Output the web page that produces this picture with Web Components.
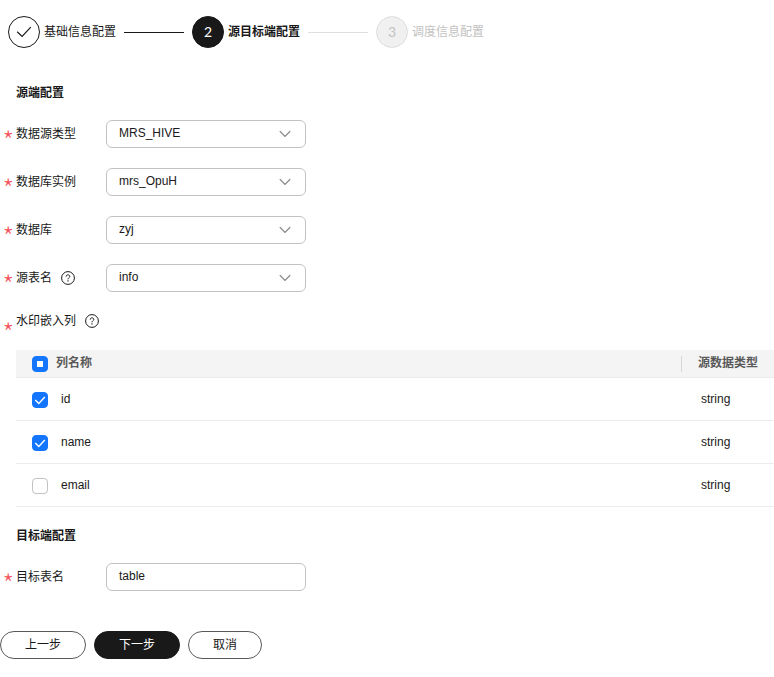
<!DOCTYPE html>
<html lang="zh-CN">
<head>
<meta charset="utf-8">
<title>源目标端配置</title>
<style>
html,body{margin:0;background:#fff}
body{width:774px;height:677px;overflow:hidden;font:12px/18px "Liberation Sans","Noto Sans CJK SC",sans-serif;color:#191919}
</style>
</head>
<body>
<wizard-page></wizard-page>
<script>
const define = (name, html, setup) => {
  const t = document.createElement('template');
  t.innerHTML = html;
  customElements.define(name, class extends HTMLElement {
    constructor() {
      super();
      this.attachShadow({mode: 'open'}).append(t.content.cloneNode(true));
    }
    connectedCallback() { if (setup) setup(this, this.shadowRoot); }
  });
};

define('step-item', `<style>
:host{display:flex;align-items:center;gap:4px;height:32px}
.dot{box-sizing:border-box;width:32px;height:32px;border-radius:50%;border:1px solid #191919;display:flex;align-items:center;justify-content:center;font:14px/20px Lato,"Liberation Sans",sans-serif}
svg{display:none}
:host([state=done]) svg{display:block}
:host([state=active]) .dot{background:#191919;color:#fff}
:host([state=active]) .label{font-weight:700}
:host([state=wait]) .dot{background:#f0f0f0;border-color:#dfdfdf;color:#c2c2c2}
:host([state=wait]) .label{color:#c2c2c2}
.label{white-space:nowrap}
</style><span class="dot"><svg width="16" height="12" viewBox="0 0 16 12" fill="none" stroke="#191919" stroke-width="1.2"><path d="M1.2 5.8 6.1 10.5 14.8 1.2"/></svg><span class="num"></span></span><span class="label"><slot></slot></span>`,
(el, r) => { r.querySelector('.num').textContent = el.getAttribute('num') || ''; });

define('step-line', `<style>
:host{display:block;width:60px;height:1px;margin:1px 8px 0;background:#191919}
:host([muted]){background:#dfdfdf}
</style>`);

define('section-title', `<style>:host{display:block;height:18px;padding-left:16px;font-weight:700}</style><slot></slot>`);

define('help-icon', `<style>:host{display:block;width:14px;height:14px}svg{display:block}</style>
<svg width="14" height="14" viewBox="0 0 14 14" fill="none" stroke="#191919"><circle cx="7" cy="7" r="6.4" stroke-width="1"/><path d="M5.2 5.6C5.2 4.5 6 3.8 7 3.8s1.8.7 1.8 1.6C8.8 6.6 7 6.7 7 8.3" stroke-width="1"/><path d="M7 9.2v1.2" stroke-width="1.1"/></svg>`);

define('form-row', `<style>
:host{display:flex;align-items:center;height:28px}
.star{box-sizing:border-box;width:12px;margin:0 4px 0 0;padding-left:2.5px;height:18px;font:300 26px/30px "Noto Sans CJK SC",sans-serif;color:#f3535b}
:host([low]) .star{margin-top:10px}
.label{width:90px;display:flex;align-items:center;gap:9px;white-space:nowrap}
</style><span class="star">*</span><span class="label"><span class="t"></span><slot name="help"></slot></span><slot></slot>`,
(el, r) => { r.querySelector('.t').textContent = el.getAttribute('label'); });

define('field-box', `<style>
:host{box-sizing:border-box;width:200px;height:28px;border:1px solid #c2c2c2;border-radius:6px;display:flex;align-items:center;justify-content:space-between;padding:0 14px 2px 12px;line-height:16px}
svg{display:none}
:host([select]) svg{display:block;margin-top:2px}
</style><slot></slot><svg width="12" height="8" viewBox="0 0 12 8" fill="none" stroke="#808080" stroke-width="1.2"><path d="M.8 1.2 6 6.4l5.2-5.2"/></svg>`);

define('check-box', `<style>
:host{box-sizing:border-box;display:block;width:16px;height:16px;border:1px solid #c2c2c2;border-radius:4px;background:#fff}
:host([state]){border-color:#1476ff;background:#1476ff}
svg{display:block;margin:-1px}
path,rect{display:none}
:host([state=on]) path,:host([state=some]) rect{display:block}
</style><svg width="16" height="16" viewBox="0 0 16 16" fill="none"><path d="m3.3 8 3.5 3.5 6-6.4" stroke="#fff" stroke-width="1.4"/><rect x="5" y="5" width="6" height="6" rx=".5" fill="#fff"/></svg>`);

define('table-row', `<style>
:host{box-sizing:border-box;display:grid;grid-template-columns:16px 1fr 93px;height:43px;border-bottom:1px solid #ececec;padding-left:16px;align-items:center}
::slotted(check-box){margin-top:2px}
.name{padding-left:13px}.type{padding-left:20px}
:host([head]){height:28px;background:#f4f4f4;color:#595959;font-weight:700}
:host([head]) ::slotted(check-box){margin-top:1px}
:host([head]) .name{padding-left:8px;margin-top:-2px}
:host([head]) .type{padding-left:16px;height:16px;line-height:14px;border-left:1px solid #d6d6d6;margin-top:1px}
</style><slot name="check"></slot><span class="name"><slot></slot></span><span class="type"><slot name="type"></slot></span>`);

define('pill-button', `<style>
:host{box-sizing:border-box;display:block;height:28px;border:1px solid #595959;border-radius:14px;padding:4px 24px;white-space:nowrap}
:host([primary]){background:#191919;border-color:#191919;color:#fff}
</style><slot></slot>`);

define('wizard-page', `<style>
:host{display:block;padding-top:16px}
.steps{display:flex;align-items:center;padding-left:8px;height:32px}
.source{padding-top:36px}
.fields{display:grid;gap:20px;padding-top:18px}
.cols{margin-top:15px}
.table{padding:15px 0 20px 16px}
.target{padding-top:18px}
.actions{display:flex;gap:8px;padding-top:40px}
</style>
<div class="steps"><step-item state="done">基础信息配置</step-item><step-line></step-line><step-item state="active" num="2">源目标端配置</step-item><step-line muted></step-line><step-item state="wait" num="3">调度信息配置</step-item></div>
<div class="source"><section-title>源端配置</section-title>
<div class="fields">
<form-row label="数据源类型"><field-box select>MRS_HIVE</field-box></form-row>
<form-row label="数据库实例"><field-box select>mrs_OpuH</field-box></form-row>
<form-row label="数据库"><field-box select>zyj</field-box></form-row>
<form-row label="源表名"><help-icon slot="help"></help-icon><field-box select>info</field-box></form-row>
</div>
<form-row class="cols" label="水印嵌入列" low><help-icon slot="help"></help-icon></form-row></div>
<div class="table">
<table-row head><check-box slot="check" state="some"></check-box>列名称<span slot="type">源数据类型</span></table-row>
<table-row><check-box slot="check" state="on"></check-box>id<span slot="type">string</span></table-row>
<table-row><check-box slot="check" state="on"></check-box>name<span slot="type">string</span></table-row>
<table-row><check-box slot="check"></check-box>email<span slot="type">string</span></table-row>
</div>
<section-title>目标端配置</section-title>
<form-row class="target" label="目标表名"><field-box>table</field-box></form-row>
<div class="actions"><pill-button>上一步</pill-button><pill-button primary>下一步</pill-button><pill-button>取消</pill-button></div>`);
</script>
</body>
</html>
